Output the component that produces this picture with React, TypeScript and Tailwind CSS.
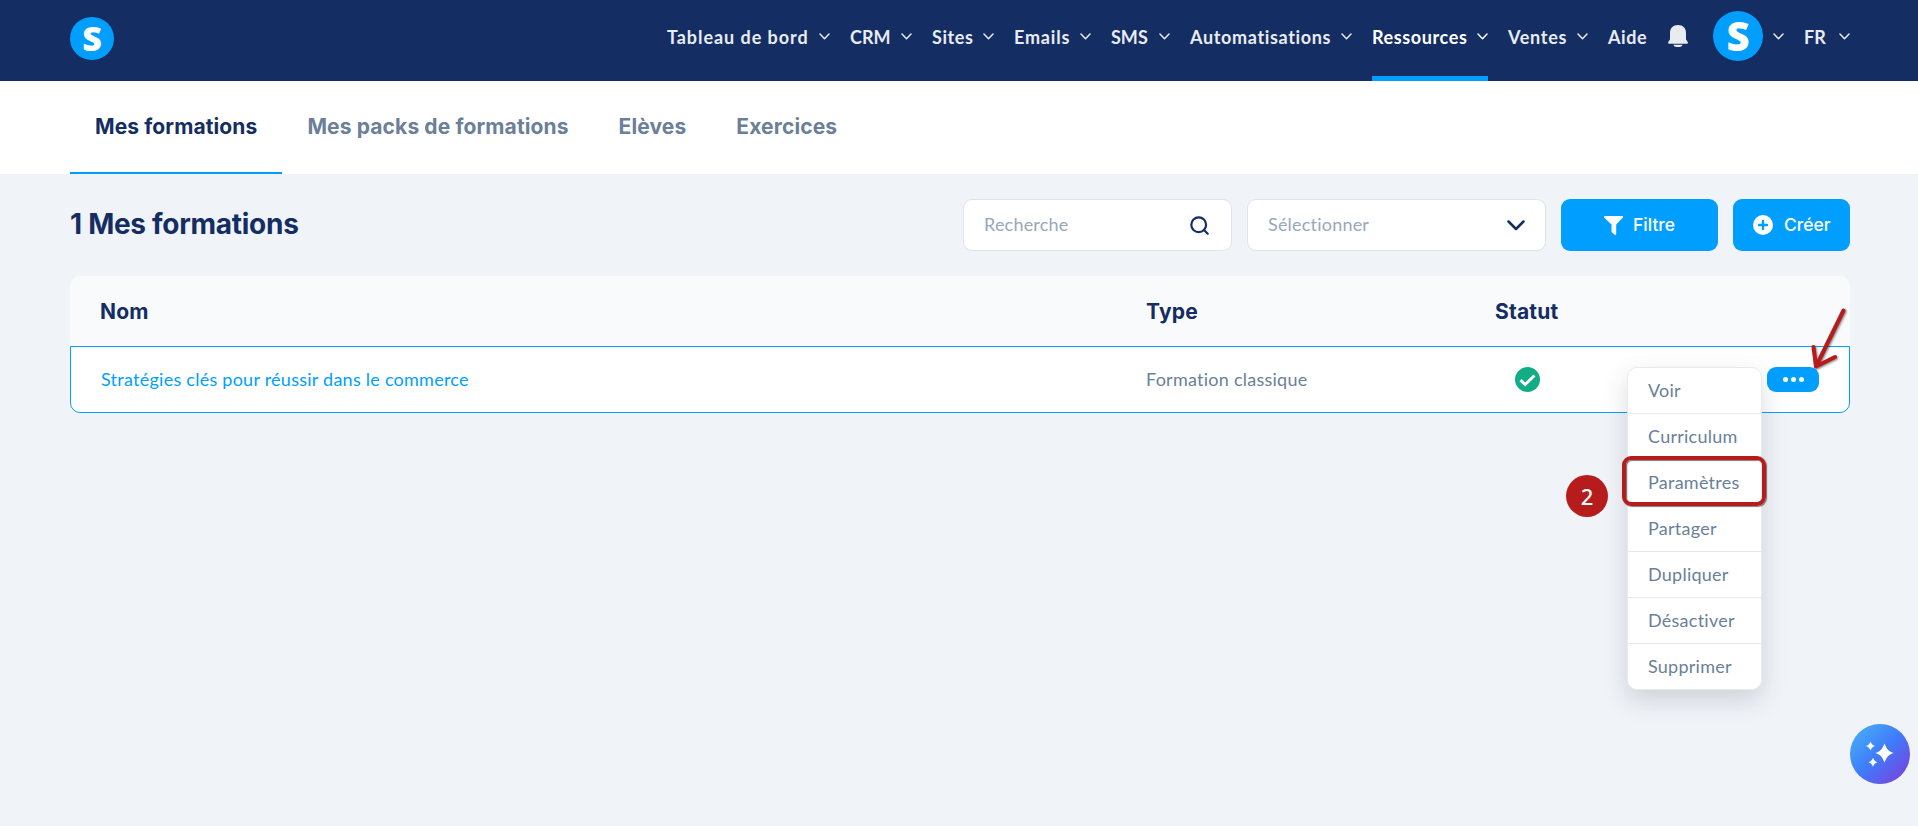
import type { ReactNode } from "react";

type NavItem = {
  label: string;
  // label box width and tracking, keeps the bar aligned
  width: string;
  chevron?: boolean;
  active?: boolean;
};

const navItems: NavItem[] = [
  { label: "Tableau de bord", width: "w-[152px] tracking-[0.95px]", chevron: true },
  { label: "CRM", width: "w-[51px]", chevron: true },
  { label: "Sites", width: "w-[51px] tracking-[0.6px]", chevron: true },
  { label: "Emails", width: "w-[66px] tracking-[0.8px]", chevron: true },
  { label: "SMS", width: "w-[48px]", chevron: true },
  { label: "Automatisations", width: "w-[151px] tracking-[0.65px]", chevron: true },
  { label: "Ressources", width: "w-[105px] tracking-[0.6px]", chevron: true, active: true },
  { label: "Ventes", width: "w-[69px] tracking-[0.7px]", chevron: true },
  { label: "Aide", width: "w-[40px] tracking-[0.6px]" },
];

const tabs = ["Mes formations", "Mes packs de formations", "Elèves", "Exercices"];

const menuItems = ["Voir", "Curriculum", "Paramètres", "Partager", "Dupliquer", "Désactiver", "Supprimer"];

function NavChevron() {
  return (
    <svg className="w-[11px] h-[7px] shrink-0" viewBox="0 0 11 7" fill="none" stroke="currentColor" strokeWidth="1.5" strokeLinecap="round" strokeLinejoin="round">
      <path d="M1 1l4.5 4.7L10 1" />
    </svg>
  );
}

function Logo({ className }: { className: string }) {
  return (
    <span className={`rounded-full bg-[#009fff] text-white flex items-center justify-center font-['Open_Sans',sans-serif] font-extrabold leading-none shrink-0 ${className}`}>
      S
    </span>
  );
}

function Button({ className, children }: { className: string; children: ReactNode }) {
  return (
    <button className={`h-[52px] rounded-[9px] bg-[#009fff] text-white text-[17.5px] font-medium font-['Inter',sans-serif] flex items-center ${className}`}>
      {children}
    </button>
  );
}

function Header() {
  return (
    <header className="h-[81px] bg-[#142d63] text-[#e8ecf1] pl-[70px] pr-[68px] flex justify-between">
      <Logo className="w-[44px] h-[43px] mt-[17px] pb-[2px] text-[34px]" />

      <nav className="flex h-full text-[18px] font-bold leading-none">
        {navItems.map((item) => (
          <div
            key={item.label}
            className={`relative h-full flex items-center pb-[8px] mr-[20px] ${item.active ? "text-white" : ""}`}
          >
            <span className={`${item.width} whitespace-nowrap`}>{item.label}</span>
            {item.chevron && <NavChevron />}
            {item.active && <span className="absolute left-0 right-0 bottom-0 h-[5px] bg-[#009fff]" />}
          </div>
        ))}

        <svg className="w-[20px] h-[22px] mt-[25px]" viewBox="0 0 20 22" fill="currentColor">
          <path d="M10 0C5 0 2 3.2 2 8v6.5L.4 16.8C-.2 17.8.2 18.8 1.3 18.8h17.4c1.1 0 1.5-1 .9-2L18 14.5V8c0-4.8-3-8-8-8z" />
          <path d="M5.5 19.8h9c-.3 1.4-1.6 2.2-3 2.2h-3c-1.4 0-2.7-.8-3-2.2z" />
        </svg>

        <Logo className="w-[50px] h-[50px] mt-[11px] ml-[25px] pb-px text-[40px]" />
        <div className="flex items-center pb-[8px] ml-[10px]">
          <NavChevron />
          <span className="w-[35px] ml-[20px]">FR</span>
          <NavChevron />
        </div>
      </nav>
    </header>
  );
}

function Tabs() {
  return (
    <div className="h-[93px] bg-white px-[70px] flex font-['Inter',sans-serif] text-[21px] tracking-[0.12px] font-bold">
      {tabs.map((tab, i) => (
        <a
          key={tab}
          className={`h-full px-[25px] flex items-center border-b-2 whitespace-nowrap ${
            i === 0 ? "border-[#009fff] text-[#142d63]" : "border-transparent text-[#6b7f99]"
          }`}
        >
          {tab}
        </a>
      ))}
    </div>
  );
}

function Toolbar() {
  return (
    <div className="flex items-center justify-between h-[52px]">
      <h1 className="pb-[2px] font-['Inter',sans-serif] text-[28px] font-bold tracking-[-0.28px] text-[#142d63]">1 Mes formations</h1>

      <div className="flex gap-[15px] text-[18px] tracking-[0.2px] text-[#99a7b8]">
        <div className="w-[269px] h-[52px] rounded-[9px] border border-[#dfe4ea] bg-white pl-[20px] pr-[22px] flex items-center justify-between">
          <span className="pb-px">Recherche</span>
          <svg className="w-[19px] h-[19px] text-[#142d63]" viewBox="0 0 19 19" fill="none" stroke="currentColor" strokeWidth="2.2" strokeLinecap="round">
            <circle cx="8.7" cy="8.7" r="7.4" />
            <path d="M14 14l3.7 3.7" />
          </svg>
        </div>

        <div className="w-[299px] h-[52px] rounded-[9px] border border-[#dfe4ea] bg-white px-[20px] flex items-center justify-between">
          <span className="pb-px">Sélectionner</span>
          <svg className="w-[18px] h-[11px] text-[#142d63]" viewBox="0 0 18 11" fill="none" stroke="currentColor" strokeWidth="2.5" strokeLinecap="round" strokeLinejoin="round">
            <path d="M1.5 1.5L9 9l7.5-7.5" />
          </svg>
        </div>

        <Button className="w-[157px] pl-[43px] gap-[10px] tracking-normal">
          <svg className="w-[19px] h-[19px]" viewBox="0 0 19 19" fill="currentColor">
            <path d="M1 0h17c.9 0 1.3 1 .7 1.7L12.2 8.5v9.6c0 .8-.9 1.1-1.5.7l-2.7-2.3a1.3 1.3 0 0 1-.5-1V8.5L.3 1.7C-.3 1 .1 0 1 0z" />
          </svg>
          Filtre
        </Button>
        <Button className="w-[117px] pl-[20px] gap-[11px] tracking-normal">
          <svg className="w-[20px] h-[20px]" viewBox="0 0 20 20">
            <circle cx="10" cy="10" r="10" fill="#fff" />
            <path d="M10 6v8M6 10h8" stroke="#009fff" strokeWidth="2.4" strokeLinecap="round" />
          </svg>
          Créer
        </Button>
      </div>
    </div>
  );
}

function ActionMenu() {
  return (
    <ul className="absolute right-[87px] top-[20px] z-10 w-[135px] rounded-[10px] border border-[#e8eaed] bg-white shadow-[0_10px_24px_rgba(40,50,60,0.17)] text-[18px] tracking-[0.25px] text-[#6b7f99]">
      {menuItems.map((item) => (
        <li key={item} className="relative h-[46px] pl-[20px] flex items-center border-b border-[#e6e8eb] last:border-b-0 last:h-[45px]">
          {item}
          {item === "Paramètres" && (
            <>
              <span className="absolute left-[-6px] top-[-4px] w-[144px] h-[50px] rounded-[9px] border-4 border-[#b71c1c] shadow-[1px_1px_1px_rgba(0,0,0,0.5),inset_1px_1px_1px_rgba(0,0,0,0.5)]" />
              <span className="absolute left-[-62px] top-[15px] w-[42px] h-[42px] rounded-full bg-[#b71c1c] text-white text-[22px] font-medium font-['Noto_Sans',sans-serif] tracking-normal flex items-center justify-center">
                2
              </span>
            </>
          )}
        </li>
      ))}
    </ul>
  );
}

function CourseTable() {
  return (
    <div className="mt-[25px]">
      <div className="h-[70px] rounded-t-[10px] bg-[#f9fafc] pl-[30px] pt-px flex items-center font-['Inter',sans-serif] text-[21px] tracking-[0.2px] font-bold text-[#142d63]">
        <div className="w-[1046px]">Nom</div>
        <div className="w-[349px]">Type</div>
        <div>Statut</div>
      </div>

      <div className="relative h-[67px] rounded-b-[10px] border border-[#009fff] bg-white pl-[30px] flex items-center text-[18px] tracking-[0.25px] text-[#6b7f99]">
        <a className="w-[1045px] text-[#009fff]">Stratégies clés pour réussir dans le commerce</a>
        <div className="w-[369px]">Formation classique</div>
        <svg className="w-[25px] h-[25px]" viewBox="0 0 25 25">
          <circle cx="12.5" cy="12.5" r="12.5" fill="#12ad86" />
          <path d="M5.5 13.2l4.7 4.3 9.3-9" fill="none" stroke="#fff" strokeWidth="3" />
        </svg>
        <button className="ml-auto mr-[30px] w-[52px] h-[25px] rounded-[9px] bg-[#009fff] flex items-center justify-center gap-[3px]">
          <span className="w-[5px] h-[5px] rounded-full bg-white" />
          <span className="w-[5px] h-[5px] rounded-full bg-white" />
          <span className="w-[5px] h-[5px] rounded-full bg-white" />
        </button>

        <ActionMenu />

        {/* pointer towards the actions button */}
        <svg className="absolute right-0 top-[-42px] z-20 w-[50px] h-[70px] drop-shadow-[1px_1px_1px_rgba(0,0,0,0.5)]" viewBox="0 0 50 70" fill="none" stroke="#b71c1c" strokeWidth="4" strokeLinecap="round" strokeLinejoin="round">
          <path d="M44.5 5.5L17 61.5M14.5 42L17 61.5L36 52" />
        </svg>
      </div>
    </div>
  );
}

function AssistantButton() {
  return (
    <button className="absolute right-[8px] top-[724px] w-[60px] h-[60px] rounded-full bg-[linear-gradient(135deg,#47b0f5_5%,#3f7bfb_50%,#7c3fdb_95%)]">
      <svg className="w-[60px] h-[60px]" viewBox="0 0 60 60" fill="#fff">
        <path d="M34.5 19.5c2.5 6 3.6 7.2 9 9.5-5.4 2.3-6.5 3.5-9 9.5-2.5-6-3.6-7.2-9-9.5 5.4-2.3 6.5-3.5 9-9.5z" />
        <path d="M20.5 17.5c1.3 2.8 1.7 3.2 4.4 4.5-2.7 1.3-3.1 1.7-4.4 4.5-1.3-2.8-1.7-3.2-4.4-4.5 2.7-1.3 3.1-1.7 4.4-4.5z" />
        <path d="M23 33.8c1.3 2.8 1.7 3.2 4.4 4.5-2.7 1.3-3.1 1.7-4.4 4.5-1.3-2.8-1.7-3.2-4.4-4.5 2.7-1.3 3.1-1.7 4.4-4.5z" />
      </svg>
    </button>
  );
}

export default function App() {
  return (
    <div className="relative w-full h-[826px] overflow-hidden bg-[#f0f4f9] font-['Lato',sans-serif]">
      <Header />
      <Tabs />
      <main className="pl-[70px] pr-[68px] pt-[25px]">
        <Toolbar />
        <CourseTable />
      </main>
      <AssistantButton />
    </div>
  );
}
